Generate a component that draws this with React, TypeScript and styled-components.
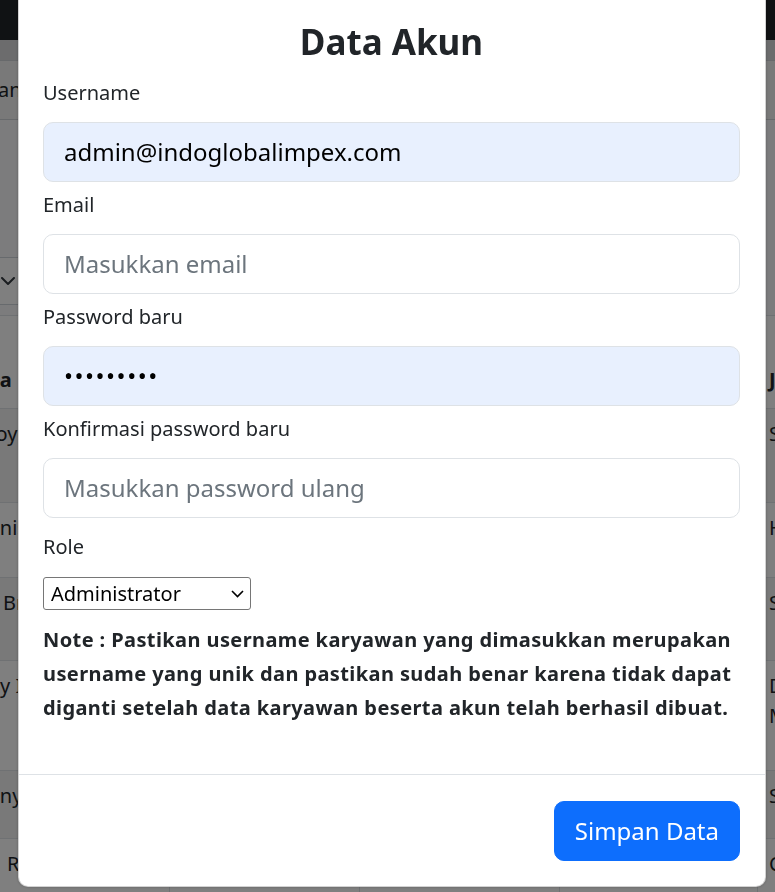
import styled, { createGlobalStyle } from "styled-components";

const GlobalStyle = createGlobalStyle`
  * { box-sizing: border-box; }
  html, body { margin: 0; padding: 0; }
  body {
    width: 775px;
    height: 892px;
    overflow: hidden;
    font-family: "Noto Sans", "Open Sans", sans-serif;
    color: #212529;
    background: #f8f9fa;
  }
`;

/* ---------- page behind the modal ---------- */

const Page = styled.div`
  height: 892px;
  overflow: hidden;
  background: #f8f9fa;
  font-size: 20px;
  line-height: 30px;
`;

const Navbar = styled.header`
  height: 40px;
  background: #212529;
`;

const SubBar = styled.div`
  height: 20px;
  background: #d8d9db;
`;

const TabRow = styled.div`
  height: 60px;
  display: flex;
  align-items: center;
  background: #f3f3f3;
  border-top: 1px solid #cfd2d6;
  border-bottom: 1px solid #cfd2d6;
  overflow: hidden;
`;

const Shifted = styled.span<{ $x: number }>`
  display: block;
  white-space: nowrap;
  text-indent: ${(p) => p.$x}px;
`;

const FilterRow = styled.div`
  margin-top: 137px;
  height: 48px;
  display: flex;
`;

const SelectStub = styled.div`
  margin-left: -100px;
  width: 132px;
  height: 48px;
  display: flex;
  align-items: center;
  justify-content: flex-end;
  padding-right: 16px;
  background: #fff;
  border: 1px solid #ced4da;
  border-radius: 8px;
`;

const Table = styled.div`
  margin-top: 10px;
  border-top: 1px solid #dee2e6;
`;

const Row = styled.div<{ $h: number; $striped?: boolean; $head?: boolean }>`
  display: grid;
  grid-template-columns: 170px 190px 200px 198px 1fr;
  height: ${(p) => p.$h}px;
  border-bottom: 1px solid #dee2e6;
  background: ${(p) => (p.$striped ? "#f2f2f2" : "#fff")};
  font-weight: ${(p) => (p.$head ? 700 : 400)};
`;

const Cell = styled.div<{ $head?: boolean }>`
  display: flex;
  flex-direction: column;
  justify-content: ${(p) => (p.$head ? "flex-end" : "flex-start")};
  padding: ${(p) => (p.$head ? "0 10px 13px 11px" : "10px 10px 0 11px")};
  border-right: 1px solid #dee2e6;
  white-space: nowrap;
  overflow: hidden;
`;

const FirstCell = styled(Cell)`
  padding-left: 0;
`;

const LastCell = styled(Cell)`
  border-right: none;
`;

/* ---------- modal ---------- */

const Backdrop = styled.div`
  position: fixed;
  inset: 0;
  background: rgba(0, 0, 0, 0.5);
`;

const ModalLayer = styled.div`
  position: fixed;
  inset: 0;
  overflow: hidden;
  padding-left: 18px;
`;

const ModalContent = styled.div`
  width: 748px;
  margin-top: -12px;
  background: #fff;
  border: 1px solid rgba(0, 0, 0, 0.175);
  border-radius: 10px;
  box-shadow: 0 0 3px rgba(0, 0, 0, 0.25);
`;

const ModalBody = styled.div`
  padding: 32px 25px 49px 24px;
`;

const Title = styled.h3`
  margin: 0 0 15px;
  text-align: center;
  font-size: 35px;
  line-height: 42px;
  font-weight: 700;
  color: #212529;
`;

const Field = styled.div`
  margin-bottom: 8.5px;
`;

const Label = styled.label`
  display: block;
  font-size: 20px;
  line-height: 30px;
  margin-bottom: 14px;
  color: #212529;
`;

const RoleLabel = styled(Label)`
  margin-top: 14.5px;
  margin-bottom: 15px;
`;

const Input = styled.input<{ $filled?: boolean }>`
  display: block;
  width: 100%;
  height: 59.5px;
  padding: 10px 20px;
  font-family: inherit;
  font-size: 24px;
  line-height: 37.5px;
  color: #000;
  background: ${(p) => (p.$filled ? "#e8f0fe" : "#fff")};
  border: 1px solid #dee2e6;
  border-radius: 10px;
  outline: none;

  &::placeholder {
    color: #6c757d;
  }

  &[type="password"]:not(:placeholder-shown) {
    letter-spacing: 1.5px;
  }
`;

const SelectWrap = styled.div`
  position: relative;
  width: 208px;
  height: 33px;
`;

const Select = styled.select`
  appearance: none;
  width: 100%;
  height: 100%;
  padding: 0 7px;
  font-family: inherit;
  font-size: 20px;
  color: #000;
  background: #fff;
  border: 1px solid #767676;
  border-radius: 3px;
`;

const SelectChevron = styled.svg`
  position: absolute;
  right: 7px;
  top: 13px;
  pointer-events: none;
`;

const Note = styled.p`
  margin: 13px 0 0;
  font-size: 20px;
  line-height: 34px;
  font-weight: 700;
  letter-spacing: 0.4px;
  color: #212529;
`;

const NoteLine = styled.span`
  display: block;
  white-space: nowrap;
`;

const ModalFooter = styled.div`
  display: flex;
  justify-content: flex-end;
  padding: 26px 25px 25px;
  border-top: 1px solid #dee2e6;
`;

const PrimaryButton = styled.button`
  height: 59.5px;
  padding: 10px 20px;
  font-family: inherit;
  font-size: 24px;
  line-height: 37.5px;
  color: #fff;
  background: #0d6efd;
  border: 1px solid #0d6efd;
  border-radius: 10px;
`;

const rows = [
  { h: 94, striped: true, first: "Joyce Tanoto", x: -10, last: ["Staff"] },
  { h: 75, striped: false, first: "Anis Saputra", x: -13, last: ["HRD"] },
  { h: 83, striped: true, first: "Bryan Wijaya", x: 3, last: ["Staff"] },
  { h: 110, striped: false, first: "Rudy Irawan", x: -37, last: ["Direktur", "Marketing"] },
  { h: 68, striped: true, first: "Tony Halim", x: -22, last: ["Staff"] },
  { h: 80, striped: false, first: "Rina Susanti", x: 7, last: ["CEO"] },
];

export default function App() {
  return (
    <>
      <GlobalStyle />
      <Page>
        <Navbar />
        <SubBar />
        <TabRow>
          <Shifted $x={-71}>Karyawan</Shifted>
        </TabRow>
        <FilterRow>
          <SelectStub>
            <svg width="14" height="9" viewBox="0 0 14 9">
              <polyline
                points="1,1 7,7 13,1"
                fill="none"
                stroke="#343a40"
                strokeWidth="2"
                strokeLinecap="round"
                strokeLinejoin="round"
              />
            </svg>
          </SelectStub>
        </FilterRow>
        <Table>
          <Row $h={93} $head>
            <FirstCell $head>
              <Shifted $x={-48}>Nama</Shifted>
            </FirstCell>
            <Cell $head>Email</Cell>
            <Cell $head>Telepon</Cell>
            <Cell $head>Alamat</Cell>
            <LastCell $head>Jabatan</LastCell>
          </Row>
          {rows.map((r) => (
            <Row key={r.first} $h={r.h} $striped={r.striped}>
              <FirstCell>
                <Shifted $x={r.x}>{r.first}</Shifted>
              </FirstCell>
              <Cell />
              <Cell />
              <Cell />
              <LastCell>
                {r.last.map((t) => (
                  <span key={t}>{t}</span>
                ))}
              </LastCell>
            </Row>
          ))}
        </Table>
      </Page>

      <Backdrop />

      <ModalLayer>
        <ModalContent>
          <ModalBody>
            <Title>Data Akun</Title>
            <Field>
              <Label>Username</Label>
              <Input $filled readOnly value="admin@indoglobalimpex.com" />
            </Field>
            <Field>
              <Label>Email</Label>
              <Input placeholder="Masukkan email" />
            </Field>
            <Field>
              <Label>Password baru</Label>
              <Input $filled type="password" readOnly value="123456789" />
            </Field>
            <Field>
              <Label>Konfirmasi password baru</Label>
              <Input type="password" placeholder="Masukkan password ulang" />
            </Field>
            <RoleLabel>Role</RoleLabel>
            <SelectWrap>
              <Select defaultValue="admin">
                <option value="admin">Administrator</option>
                <option value="staff">Staff</option>
              </Select>
              <SelectChevron width="13" height="8" viewBox="0 0 13 8">
                <polyline
                  points="1,1 6.5,6.5 12,1"
                  fill="none"
                  stroke="#000"
                  strokeWidth="1.6"
                />
              </SelectChevron>
            </SelectWrap>
            <Note>
              <NoteLine>Note : Pastikan username karyawan yang dimasukkan merupakan</NoteLine>
              <NoteLine>username yang unik dan pastikan sudah benar karena tidak dapat</NoteLine>
              <NoteLine>diganti setelah data karyawan beserta akun telah berhasil dibuat.</NoteLine>
            </Note>
          </ModalBody>
          <ModalFooter>
            <PrimaryButton>Simpan Data</PrimaryButton>
          </ModalFooter>
        </ModalContent>
      </ModalLayer>
    </>
  );
}
